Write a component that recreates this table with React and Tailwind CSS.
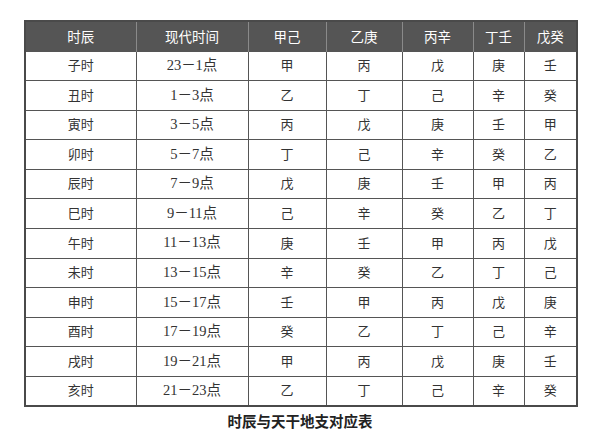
import React from "react";

const HEAD = ["时辰", "现代时间", "甲己", "乙庚", "丙辛", "丁壬", "戊癸"];
const WIDTHS = ["w-[111px]", "w-[112px]", "w-[78px]", "w-[76px]", "w-[71px]", "w-[51px]", "w-[53px]"];

const ROWS = [
  ["子时", "23－1点", "甲", "丙", "戊", "庚", "壬"],
  ["丑时", "1－3点", "乙", "丁", "己", "辛", "癸"],
  ["寅时", "3－5点", "丙", "戊", "庚", "壬", "甲"],
  ["卯时", "5－7点", "丁", "己", "辛", "癸", "乙"],
  ["辰时", "7－9点", "戊", "庚", "壬", "甲", "丙"],
  ["巳时", "9－11点", "己", "辛", "癸", "乙", "丁"],
  ["午时", "11－13点", "庚", "壬", "甲", "丙", "戊"],
  ["未时", "13－15点", "辛", "癸", "乙", "丁", "己"],
  ["申时", "15－17点", "壬", "甲", "丙", "戊", "庚"],
  ["酉时", "17－19点", "癸", "乙", "丁", "己", "辛"],
  ["戌时", "19－21点", "甲", "丙", "戊", "庚", "壬"],
  ["亥时", "21－23点", "乙", "丁", "己", "辛", "癸"],
];

export default function App() {
  return (
    <div className="w-[600px] h-[436px] bg-white pt-[20px] pl-[24px]">
      <table className="border-collapse table-fixed border-2 border-[#4a4a4a]">
        <thead>
          <tr className="h-[30px] bg-[#555555]">
            {HEAD.map((h, i) => (
              <th
                key={h}
                className={`${WIDTHS[i]} p-0 border-l border-[#8a8a8a] first:border-l-0 text-white text-[13.5px] font-normal text-center font-['Noto_Sans_CJK_SC',sans-serif]`}
              >
                {h}
              </th>
            ))}
          </tr>
        </thead>
        <tbody>
          {ROWS.map((r) => (
            <tr key={r[0]} className="h-[29.6px]">
              {r.map((c, i) => (
                <td
                  key={i}
                  className={`p-0 border border-[#555555] text-center text-[#333333] font-['Liberation_Serif','Noto_Sans_CJK_SC',serif] ${i === 1 ? "text-[14.5px]" : "text-[13px]"}`}
                >
                  {c}
                </td>
              ))}
            </tr>
          ))}
        </tbody>
      </table>
      <div className="w-[552px] mt-[3px] text-center text-[14.5px] font-bold text-[#222222] font-['Noto_Sans_CJK_SC',sans-serif]">
        时辰与天干地支对应表
      </div>
    </div>
  );
}
